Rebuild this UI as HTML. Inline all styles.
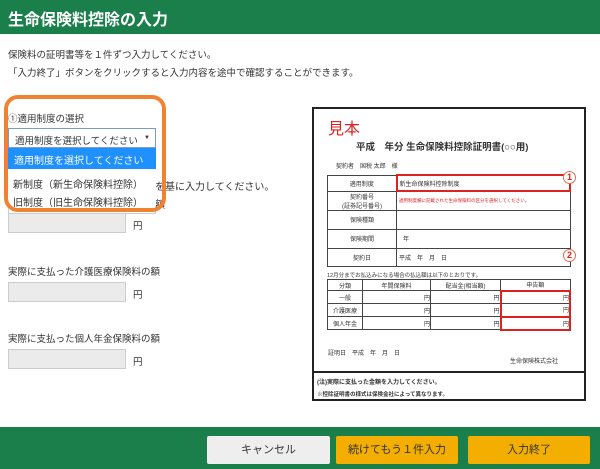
<!DOCTYPE html>
<html><head><meta charset="utf-8"><style>
*{margin:0;padding:0;box-sizing:border-box}
body{width:600px;height:469px;position:relative;background:#fff;font-family:"Liberation Sans","Noto Sans CJK JP",sans-serif;color:#333;overflow:hidden;font-size:9.5px}
.a{position:absolute;white-space:nowrap}
.hd{left:0;top:0;width:600px;height:34px;background:#1a7f4b;color:#fff;font-size:16px;font-weight:bold;padding:6px 8px}
.inp{position:absolute;left:8px;width:118px;height:20px;background:#ebebeb;border:1px solid #ccc}
.ft{left:0;top:427px;width:600px;height:42px;background:#1a7f4b}
.btn{position:absolute;top:436px;height:28px;font-size:11px;text-align:center;line-height:28px;border-radius:2px}
.doc{left:312px;top:107px;width:274px;height:294px;border:2px solid #222}
.t{position:absolute;font-size:6px;color:#333}
table{border-collapse:collapse;position:absolute}
td{border:1px solid #444;font-size:6px;text-align:center;padding:0}
</style></head><body>
<div class="a hd">生命保険料控除の入力</div>
<div class="a" style="left:8px;top:47px">保険料の証明書等を１件ずつ入力してください。</div>
<div class="a" style="left:8px;top:65px">「入力終了」ボタンをクリックすると入力内容を途中で確認することができます。</div>

<div class="a" style="left:155px;top:178px;font-size:10px">を基に入力してください。</div>
<div class="a" style="left:155px;top:196px;font-size:10px">額</div>
<div class="a" style="left:8px;top:202px;width:148px;height:12px;border:1px solid #ccc;border-top:none"></div>
<div class="inp" style="top:213px"></div><div class="a" style="left:133px;top:218px">円</div>
<div class="a" style="left:8px;top:264px">実際に支払った介護医療保険料の額</div>
<div class="inp" style="top:282px"></div><div class="a" style="left:133px;top:287px">円</div>
<div class="a" style="left:8px;top:331px">実際に支払った個人年金保険料の額</div>
<div class="inp" style="top:349px"></div><div class="a" style="left:133px;top:354px">円</div>

<div class="a" style="left:8px;top:111px">①適用制度の選択</div>
<div class="a" style="left:8px;top:128px;width:148px;height:20px;border:1px solid #7a9cc8;background:#fff;padding:4px 6px;font-size:9.5px">適用制度を選択してください<span style="position:absolute;right:5px;top:6px;font-size:6px">▼</span></div>
<div class="a" style="left:8px;top:148px;width:148px;height:58px;background:#fff">
<div style="background:#1e90ff;color:#fff;height:21px;padding:4px 6px;font-size:10px">適用制度を選択してください</div>
<div style="padding:7px 5px 0;font-size:10px;height:20px">新制度（新生命保険料控除）</div>
<div style="padding:5px 5px 0;font-size:10px">旧制度（旧生命保険料控除）</div>
</div>
<div class="a" style="left:4px;top:95px;width:162px;height:117px;border:4px solid #f08231;border-radius:14px"></div>

<div class="a doc">
<div class="t" style="left:14px;top:6px;font-size:16px;color:#d22">見本</div>
<div class="t" style="left:42px;top:30px;font-size:9.5px;font-weight:bold">平成　年分 生命保険料控除証明書(○○用)</div>
<div class="t" style="left:22px;top:52px">契約者　国税 太郎　様</div>
<table style="left:13px;top:65px;width:244px">
<tr style="height:16px"><td style="width:69px">適用制度</td><td style="text-align:left;padding-left:2px;border:2px solid #d22">新生命保険料控除制度</td></tr>
<tr style="height:19px"><td>契約番号<br>(証券記号番号)</td><td style="text-align:left;color:#d22;font-size:4.5px;padding-left:2px">適用制度欄に記載された生命保険料の区分を選択してください。</td></tr>
<tr style="height:19px"><td>保険種類</td><td></td></tr>
<tr style="height:19px"><td>保険期間</td><td style="text-align:left;padding-left:6px">年</td></tr>
<tr style="height:18px"><td>契約日</td><td style="text-align:left;padding-left:2px">平成　年　月　日</td></tr>
</table>
<div class="t" style="left:13px;top:162px;font-size:5.5px">12月分までお払込みになる場合の払込額は以下のとおりです。</div>
<table style="left:13px;top:170px;width:244px">
<tr style="height:11px"><td style="width:35px">分類</td><td style="width:68px">年間保険料</td><td style="width:70px">配当金(相当額)</td><td>申告額</td></tr>
<tr style="height:13px"><td>一般</td><td style="text-align:right">円</td><td style="text-align:right">円</td><td style="text-align:right;border-left:2px solid #d22;border-right:2px solid #d22;border-top:2px solid #d22">円</td></tr>
<tr style="height:13px"><td>介護医療</td><td style="text-align:right">円</td><td style="text-align:right">円</td><td style="text-align:right;border-left:2px solid #d22;border-right:2px solid #d22">円</td></tr>
<tr style="height:13px"><td>個人年金</td><td style="text-align:right">円</td><td style="text-align:right">円</td><td style="text-align:right;border:2px solid #d22">円</td></tr>
</table>
<div class="t" style="left:249px;top:62px;width:13px;height:13px;border:1.5px solid #e07050;border-radius:50%;font-size:9px;color:#d22;text-align:center;line-height:11px;background:#fff;font-weight:bold">1</div>
<div class="t" style="left:249px;top:140px;width:13px;height:13px;border:1.5px solid #e07050;border-radius:50%;font-size:9px;color:#d22;text-align:center;line-height:11px;background:#fff;font-weight:bold">2</div>
<div class="t" style="left:14px;top:239px">証明日　平成　年　月　日</div>
<div class="t" style="left:196px;top:247px">生命保険株式会社</div>
<div class="a" style="left:-2px;top:262px;width:274px;border-top:2px solid #222"></div>
<div class="t" style="left:3px;top:268px;font-weight:bold">(注)実際に支払った金額を入力してください。</div>
<div class="t" style="left:3px;top:281px;font-weight:bold;font-size:5.5px">※控除証明書の様式は保険会社によって異なります。</div>
</div>

<div class="a ft"></div>
<div class="btn" style="left:207px;width:123px;background:#eeeeee">キャンセル</div>
<div class="btn" style="left:336px;width:122px;background:#f4ae00">続けてもう１件入力</div>
<div class="btn" style="left:468px;width:122px;background:#f4ae00">入力終了</div>
</body></html>
